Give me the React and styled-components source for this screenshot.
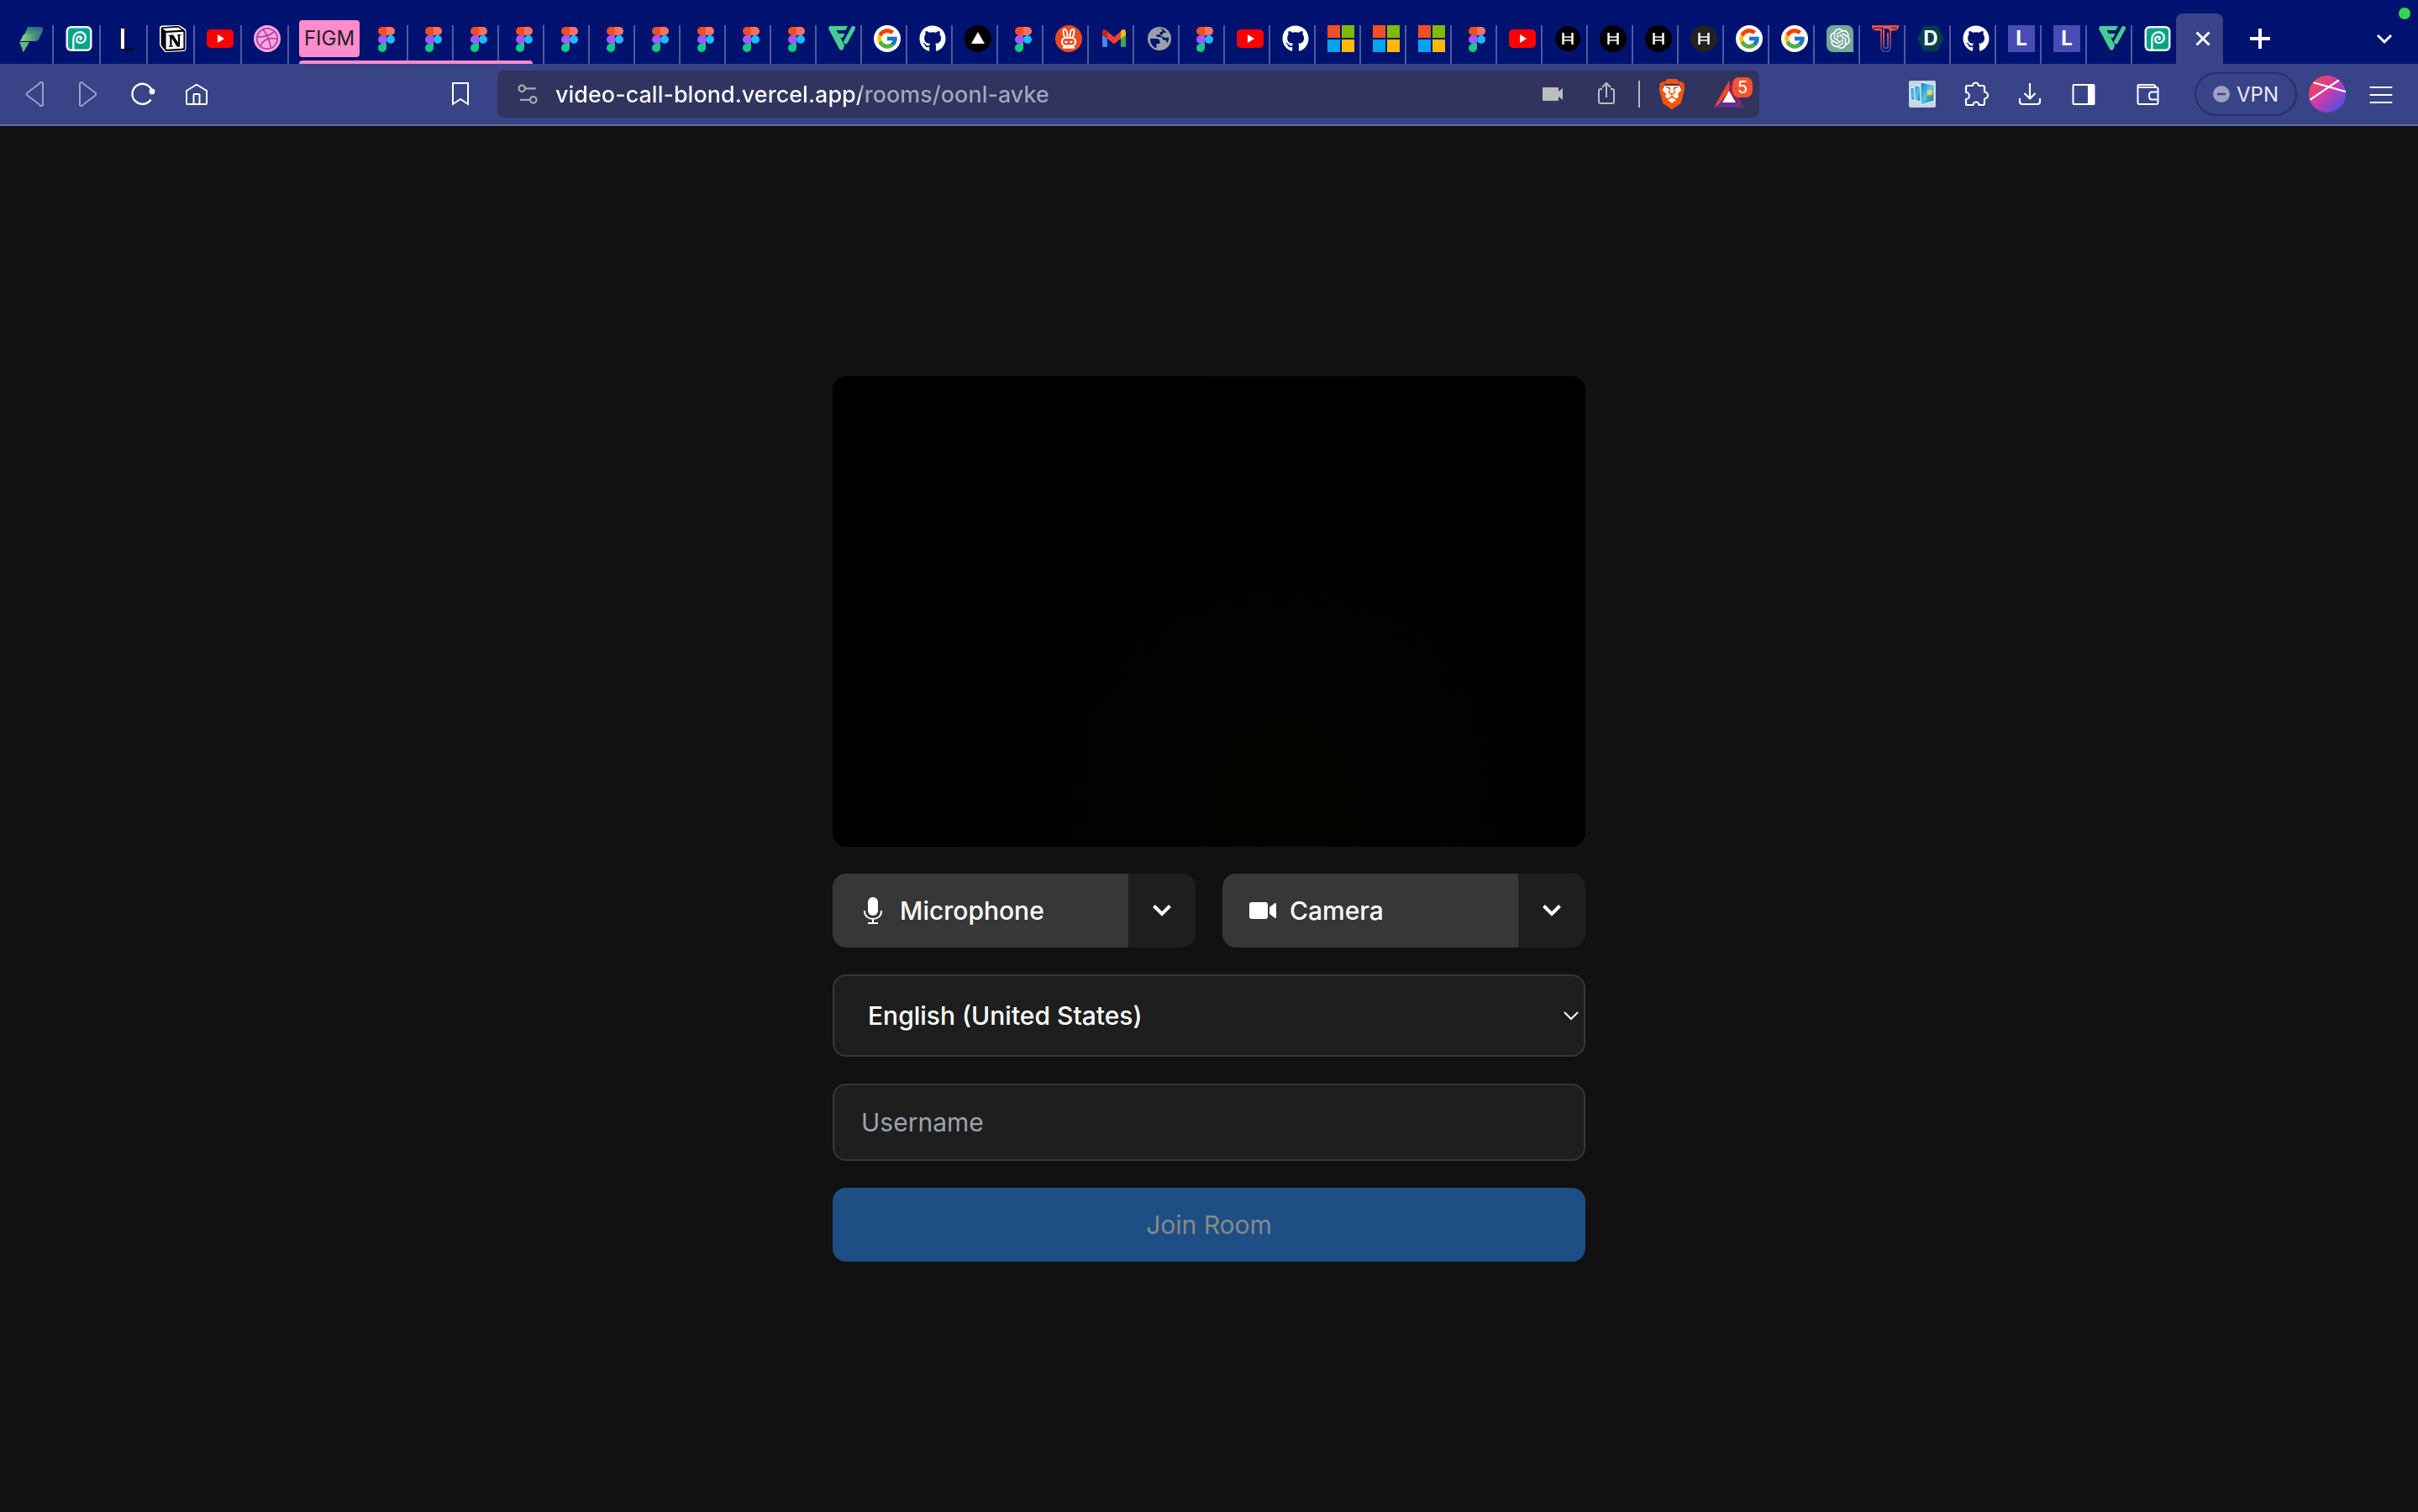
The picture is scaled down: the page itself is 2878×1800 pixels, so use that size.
import React, { useState } from "react";
import styled, { createGlobalStyle, css } from "styled-components";
import { FaGithub } from "react-icons/fa6";
import { FcGoogle } from "react-icons/fc";
import { SiBrave, SiNotion, SiOpenai } from "react-icons/si";

const GlobalStyle = createGlobalStyle`
  * {
    box-sizing: border-box;
  }
  html, body, #root {
    height: 100%;
    margin: 0;
  }
  body {
    background: #121212;
    color: #ffffff;
    font-family: Inter, "Liberation Sans", sans-serif;
  }
  button, input, select {
    font-family: inherit;
    margin: 0;
  }
  svg {
    display: block;
    flex: none;
  }
`;

const Window = styled.div`
  display: flex;
  flex-direction: column;
  min-height: 100%;
`;

/* tab strip */

const TabStrip = styled.nav`
  position: relative;
  display: flex;
  align-items: flex-end;
  height: 76px;
  padding-left: 8px;
  background: #001270;
`;

const Tab = styled.button`
  display: flex;
  flex: none;
  align-items: flex-start;
  width: ${(props) => (props.$wide ? 56 : 54)}px;
  height: 46px;
  padding: 0 0 0 14px;
  background: none;
  border: none;
  border-right: 2px solid ${(props) => (props.$last ? "transparent" : "#505a9e")};
  cursor: pointer;
`;

const TabGroup = styled.div`
  position: relative;
  display: flex;
  align-items: flex-end;
  height: 52px;
  margin-left: 12px;
  &::after {
    content: "";
    position: absolute;
    left: 0;
    bottom: 0;
    width: 278px;
    height: 4px;
    background: #ff8ccc;
    border-radius: 4px 4px 0 0;
  }
`;

const GroupLabel = styled.button`
  align-self: flex-start;
  width: 72px;
  height: 44px;
  margin-right: 2px;
  padding: 0;
  background: #ff8ccc;
  border: none;
  border-radius: 4px;
  color: #202124;
  font-size: 24px;
  line-height: 44px;
  cursor: pointer;
`;

const ActiveTab = styled.div`
  display: flex;
  flex: none;
  justify-content: center;
  width: 56px;
  height: 60px;
  margin-left: -2px;
  padding: 14px 0 0 8px;
  background: #394387;
  border-radius: 8px 8px 0 0;
`;

const StripButton = styled.button`
  display: flex;
  align-items: center;
  justify-content: center;
  width: 56px;
  height: 60px;
  margin-left: ${(props) => (props.$end ? "auto" : "16px")};
  margin-right: ${(props) => (props.$end ? "12px" : "0")};
  padding: 0;
  background: none;
  border: none;
`;

const CloseButton = styled.button`
  display: flex;
  align-items: center;
  justify-content: center;
  width: 32px;
  height: 32px;
  padding: 0;
  background: none;
  border: none;
`;

const RecordingDot = styled.span`
  position: absolute;
  top: 9px;
  right: 9px;
  width: 14px;
  height: 14px;
  border-radius: 50%;
  background: #32d74b;
`;

const Badge = styled.span`
  display: flex;
  align-items: center;
  justify-content: center;
  width: 32px;
  height: 32px;
  border-radius: ${(props) => props.$radius || "0"};
  background: ${(props) => props.$color};
  color: #ffffff;
  font-size: 24px;
  font-weight: 700;
  line-height: 32px;
`;

const HexBadge = styled(Badge)`
  clip-path: polygon(25% 3%, 75% 3%, 100% 50%, 75% 97%, 25% 97%, 0 50%);
`;

/* toolbar */

const Toolbar = styled.header`
  display: flex;
  align-items: center;
  height: 74px;
  padding: 0 12px 0 9px;
  background: #394387;
  border-bottom: 2px solid #656da3;
`;

const ToolButton = styled.button`
  display: flex;
  align-items: center;
  justify-content: center;
  flex: none;
  width: 64px;
  height: 64px;
  padding: 0;
  background: none;
  border: none;
  color: #ffffff;
  opacity: ${(props) => (props.disabled ? 0.5 : 1)};
`;

const LeftTools = styled.div`
  display: flex;
  flex: 0 0 571px;
  margin-right: 12px;
  & > :last-child {
    margin-left: auto;
  }
`;

const AddressBar = styled.form`
  display: flex;
  flex: 1;
  align-items: center;
  min-width: 0;
  height: 56px;
  padding: 0 8px 0 24px;
  background: #30345f;
  border-radius: 8px;
`;

const AddressInput = styled.input`
  flex: 1;
  min-width: 0;
  height: 56px;
  margin-left: 21px;
  padding: 0;
  border: none;
  outline: none;
  background: linear-gradient(90deg, #ffffff 363px, #a4a6bc 363px);
  background-clip: text;
  -webkit-background-clip: text;
  color: transparent;
  font-size: 27px;
  font-weight: 500;
`;

const AddressTools = styled.div`
  display: flex;
  align-items: center;
`;

const AddressButton = styled(ToolButton)`
  height: 56px;
`;

const RewardsButton = styled(AddressButton)`
  position: relative;
  width: 56px;
  margin-left: 8px;
`;

const AddressDivider = styled.span`
  width: 2px;
  height: 32px;
  margin: 0 6px;
  background: #b5b6c3;
`;

const Count = styled.span`
  position: absolute;
  top: 8px;
  right: 0;
  width: 24px;
  height: 24px;
  border-radius: 8px;
  background: #fb542b;
  font-size: 20px;
  line-height: 24px;
  text-align: center;
`;

const RightTools = styled.div`
  display: flex;
  flex: 0 0 772px;
  align-items: center;
  justify-content: flex-end;
`;

const WalletButton = styled(ToolButton)`
  margin: 0 24px 0 12px;
`;

const VpnButton = styled.button`
  display: flex;
  align-items: center;
  flex: none;
  gap: 8px;
  width: 122px;
  height: 52px;
  margin-right: 4px;
  padding: 0 0 0 20px;
  background: none;
  border: 2px solid #282f68;
  border-radius: 26px;
  color: #eaebf3;
  font-size: 24px;
`;

/* pre-join screen */

const Main = styled.main`
  display: flex;
  flex: 1;
  align-items: center;
  justify-content: center;
`;

const JoinCard = styled.form`
  display: flex;
  flex-direction: column;
  gap: 32px;
  width: 960px;
  max-width: 100%;
  padding: 32px;
  border-radius: 16px;
  background: #111111;
`;

const Preview = styled.div`
  aspect-ratio: 16 / 10;
  border-radius: 16px;
  background: radial-gradient(circle at 60% 90%, #030300, #000000 70%);
`;

const Devices = styled.div`
  display: grid;
  grid-template-columns: 1fr 1fr;
  gap: 32px;
`;

const DeviceGroup = styled.div`
  display: flex;
  height: 88px;
  border-radius: 16px;
  overflow: hidden;
`;

const control = css`
  border: none;
  color: #ffffff;
  font-size: 30px;
`;

const DeviceButton = styled.button`
  ${control}
  display: flex;
  flex: 1;
  align-items: center;
  gap: 16px;
  padding: 0 32px;
  background: #373737;
  font-weight: 500;
`;

const DeviceMenuButton = styled.button`
  ${control}
  display: flex;
  align-items: center;
  justify-content: center;
  width: 80px;
  padding: 0;
  background: #1e1e1e;
`;

const SelectWrap = styled.div`
  position: relative;
  svg {
    position: absolute;
    top: 44px;
    right: 8px;
    pointer-events: none;
  }
`;

const Select = styled.select`
  ${control}
  display: block;
  width: 100%;
  height: 98px;
  padding: 0 40px;
  appearance: none;
  background: #1e1e1e;
  border: 2px solid #373737;
  border-radius: 16px;
  font-weight: 500;
`;

const UsernameInput = styled.input`
  ${control}
  width: 100%;
  height: 92px;
  padding: 0 32px;
  background: #1e1e1e;
  border: 2px solid #373737;
  border-radius: 16px;
  outline: none;
  &::placeholder {
    color: #9ca3af;
    opacity: 1;
  }
`;

const JoinButton = styled.button`
  ${control}
  height: 88px;
  background: #1d4f84;
  border-radius: 16px;
  color: #888888;
`;

/* favicons, all on a 32px box */

const Icon = ({ size = 32, children, ...rest }) => (
  <svg width={size} height={size} viewBox="0 0 32 32" fill="none" {...rest}>
    {children}
  </svg>
);

const FigmaIcon = () => (
  <Icon>
    <path d="M11 2h5v10h-5a5 5 0 0 1 0-10z" fill="#f24e1e" />
    <path d="M16 2h5a5 5 0 0 1 0 10h-5z" fill="#ff7262" />
    <path d="M16 12h-5a5 5 0 0 0 0 10h5z" fill="#a259ff" />
    <circle cx="21" cy="17" r="5" fill="#1abcfe" />
    <path d="M11 22h5v5a5 5 0 1 1-5-5z" fill="#0acf83" />
  </Icon>
);

const PitchIcon = () => (
  <Icon>
    <defs>
      <linearGradient id="leaf" x1="0" y1="1" x2="1" y2="0">
        <stop offset="0" stopColor="#5fae7c" />
        <stop offset="0.500" stopColor="#37827f" />
        <stop offset="1" stopColor="#1f5f88" />
      </linearGradient>
      <linearGradient id="leafLow" x1="0" y1="0" x2="1" y2="0">
        <stop offset="0" stopColor="#9ad77c" />
        <stop offset="1" stopColor="#2c6f86" />
      </linearGradient>
    </defs>
    <path d="M11 2h15q4 0 3 4l-2 5H7z" fill="url(#leaf)" />
    <path d="M6 11h21l-3 6q-1 2-4 2H2z" fill="url(#leafLow)" />
    <path d="M1 20h12l-7 12q-1 0-2-5z" fill="#5fb977" />
  </Icon>
);

const SwirlIcon = () => (
  <Icon>
    <rect x="0.500" y="1" width="31" height="30" rx="6" fill="#f2f2f0" />
    <rect x="3" y="3.500" width="26" height="25" rx="4" fill="#00a48c" />
    <path
      d="M9.300 29V17C9.300 11.500 12.800 8.300 17.500 8.300a6.400 6.400 0 0 1 0 12.800c-3.600 0-4.800-2.700-4.300-4.800.6-2.400 3.100-3.300 4.800-2.300 1.500 1 .9 2.900-.5 2.900"
      stroke="#f2f2f0"
      strokeWidth="2.400"
      strokeLinecap="round"
    />
  </Icon>
);

const LineIcon = () => (
  <Icon>
    <path d="M9.500 3.500h5v25h-5z" fill="#ffffff" stroke="#1a1a1a" />
    <path d="M14 29h11" stroke="#000000" strokeWidth="2" />
  </Icon>
);

const NotionIcon = () => (
  <Icon>
    <path
      d="M2.500 0.500l20-.5q2 0 3.500 1.500l4.500 3q1 1 1 2.500v21q0 2.500-2.500 3l-21 1q-2 0-3-1.500l-4-5q-1-1.500-1-3V3.500q0-2.700 2.500-3z"
      fill="#ffffff"
    />
    <SiNotion x="1" y="1" width="30" height="30" size={30} color="#000000" />
  </Icon>
);

const YoutubeIcon = () => (
  <Icon>
    <rect y="5" width="32" height="22" rx="5" fill="#ff0000" />
    <path d="M13 11v10l8-5z" fill="#ffffff" />
  </Icon>
);

const DribbbleIcon = () => (
  <Icon>
    <circle cx="16" cy="16" r="16" fill="#ffa6e4" />
    <g stroke="#b2479a" strokeWidth="1.800">
      <circle cx="16" cy="16" r="12.200" />
      <path d="M11 5c5 6 8 13 9.500 22.500" />
      <path d="M4 14c9 0 16-1 20.500-7" />
      <path d="M7.500 25c4-8 11-11 20.500-8.500" />
    </g>
  </Icon>
);

const FvIcon = () => (
  <Icon>
    <path
      d="M2.500 1H23l-2.700 5H9.500l2.200 4h8l-2.600 5h-2.600l4.600 9-1.500 4.500q-2.500 2.500-4.600 0L.5 5Q-.5 1 2.500 1z"
      fill="#45cf8f"
    />
    <path d="M29.500 3.500L20.500 20" stroke="#45cf8f" strokeWidth="5" strokeLinecap="round" />
  </Icon>
);

const GoogleIcon = () => (
  <Badge $color="#ffffff" $radius="50%">
    <FcGoogle size={28} />
  </Badge>
);

const TriangleIcon = () => (
  <Icon>
    <circle cx="16" cy="16" r="16" fill="#000000" />
    <path d="M16 8l8 14H8z" fill="#ffffff" />
  </Icon>
);

const RabbitIcon = () => (
  <Icon>
    <circle cx="16" cy="16" r="16" fill="#eb4a1e" />
    <path
      d="M11.500 15C9.500 11 8.500 4.800 11 4.800s3.500 4 3.500 9.500M20.500 15C22.500 11 23.500 4.800 21 4.800s-3.500 4-3.500 9.500"
      stroke="#ffffff"
      strokeWidth="2"
    />
    <rect x="8" y="15" width="16" height="9.500" rx="4.500" stroke="#ffffff" strokeWidth="2.200" />
    <path d="M10 26.500h12" stroke="#ffffff" strokeWidth="2.500" strokeLinecap="round" />
    <path d="M12.500 20h1M18.500 20h1" stroke="#ffffff" strokeWidth="2.500" strokeLinecap="round" />
  </Icon>
);

const GmailIcon = () => (
  <Icon>
    <path d="M2 8v16.500Q2 26 3.500 26H8V13z" fill="#4285f4" />
    <path d="M24 13v13h4.500q1.500 0 1.500-1.500V8z" fill="#34a853" />
    <path d="M8 7.500l8 6.500 8-6.500V16l-8 6.500L8 16z" fill="#ea4335" />
    <path d="M2 12V8c0-3 3-4 5-2l1 1v9z" fill="#c5221f" />
    <path d="M30 12V8c0-3-3-4-5-2l-1 1v9z" fill="#fbbc04" />
  </Icon>
);

const GlobeIcon = () => (
  <Icon>
    <circle cx="16" cy="16" r="14" fill="#9aa0a6" />
    <g fill="#001270">
      <path d="M5 16h7.500q4 0 4 4v2h-4v5.500Q5 25 5 16z" />
      <path d="M12 5.700q4-1.500 8-.3-1 2.600-3.500 2.800v3H12.500v2.500q3 0 5 .3 2.500.5 2.500 3.500h2.500q2 0 2 4 3-3 2.500-7-4 .5-5.500-1.500-1-2.500 1-3 2-.5 1-2.500l-2-1.500-1-1.500q-4-1-8 1.200z" />
    </g>
    <path d="M16 11.500h3.500q0-2 2-3l3.500 1.500 2 4-3 1-4-1z" fill="#9aa0a6" />
  </Icon>
);

const MicrosoftIcon = () => (
  <Icon>
    <path d="M0 0h15v15H0z" fill="#f25022" />
    <path d="M17 0h15v15H17z" fill="#7fba00" />
    <path d="M0 17h15v15H0z" fill="#00a4ef" />
    <path d="M17 17h15v15H17z" fill="#ffb900" />
  </Icon>
);

const HIcon = ({ fill = "#000000", r = 16 }) => (
  <Icon>
    <circle cx="16" cy="16" r={r} fill={fill} />
    <path d="M10.500 9v14M21.500 9v14" stroke="#ffffff" strokeWidth="2.400" />
    <path d="M11 14h10M11 18h10" stroke="#ffffff" strokeWidth="1.600" />
  </Icon>
);

const TIcon = () => (
  <Icon>
    <defs>
      <linearGradient id="tee" gradientUnits="userSpaceOnUse" x1="0" y1="0" x2="0" y2="32">
        <stop offset="0" stopColor="#ff5a3c" />
        <stop offset="0.500" stopColor="#b84a5c" />
        <stop offset="1" stopColor="#3b4795" />
      </linearGradient>
    </defs>
    <g stroke="url(#tee)">
      <path d="M0 1.500h32M4 5h8M20 5h8M13 3h10" strokeWidth="2.600" />
      <path d="M1 1.500q.5 4 4 4h4.500q1.500 0 1.500 2v18q0 6 5.500 6t5.500-6V9q0-3.500 3.500-3.500h1.500q3.500 0 4-4" strokeWidth="1.600" />
      <path d="M14 5v20q0 2.500 2.500 2.500T19 25V9" strokeWidth="2" />
    </g>
  </Icon>
);

const favicons = {
  pitch: <PitchIcon />,
  swirl: <SwirlIcon />,
  line: <LineIcon />,
  notion: <NotionIcon />,
  youtube: <YoutubeIcon />,
  dribbble: <DribbbleIcon />,
  figma: <FigmaIcon />,
  fv: <FvIcon />,
  google: <GoogleIcon />,
  github: <FaGithub size={32} color="#ffffff" />,
  triangle: <TriangleIcon />,
  rabbit: <RabbitIcon />,
  gmail: <GmailIcon />,
  globe: <GlobeIcon />,
  microsoft: <MicrosoftIcon />,
  hSmall: <HIcon r={15} />,
  h: <HIcon />,
  hGrey: <HIcon fill="#222222" />,
  openai: (
    <Badge $color="#74aa9c" $radius="8px 8px 0 8px">
      <SiOpenai size={24} />
    </Badge>
  ),
  tee: <TIcon />,
  d: <HexBadge $color="#023e4f">D</HexBadge>,
  l: <Badge $color="#484cb5">L</Badge>,
};

const pinnedTabs = ["pitch", "swirl", "line", "notion", "youtube", "dribbble"];
const groupTabs = ["figma", "figma", "figma", "figma"];
const openTabs = [
  "figma", "figma", "figma", "figma", "figma", "figma", "fv", "google",
  "github", "triangle", "figma", "rabbit", "gmail", "globe", "figma", "youtube",
  "github", "microsoft", "microsoft", "microsoft", "figma", "youtube",
  "hSmall", "h", "h", "hGrey", "google", "google", "openai", "tee", "d",
  "github", "l", "l", "fv", "swirl",
];

const Tabs = () => (
  <TabStrip aria-label="Tabs">
    {pinnedTabs.map((name) => (
      <Tab key={name} $wide aria-label={name}>
        {favicons[name]}
      </Tab>
    ))}
    <TabGroup>
      <GroupLabel>FIGM</GroupLabel>
      {groupTabs.map((name, i) => (
        <Tab key={i} $wide={i === 0} aria-label={name}>
          {favicons[name]}
        </Tab>
      ))}
    </TabGroup>
    {openTabs.map((name, i) => (
      <Tab key={i} $last={i === openTabs.length - 1} aria-label={name}>
        {favicons[name]}
      </Tab>
    ))}
    <ActiveTab>
      <CloseButton aria-label="Close tab">
        <Icon stroke="#ffffff" strokeWidth="3">
          <path d="M8.500 8.500l15 15M23.500 8.500l-15 15" />
        </Icon>
      </CloseButton>
    </ActiveTab>
    <StripButton aria-label="New tab">
      <Icon stroke="#ffffff" strokeWidth="4">
        <path d="M16 4v24M4 16h24" />
      </Icon>
    </StripButton>
    <StripButton $end aria-label="Search tabs">
      <Icon stroke="#ffffff" strokeWidth="3">
        <path d="M8 12l8 8 8-8" />
      </Icon>
    </StripButton>
    <RecordingDot />
  </TabStrip>
);

const BrowserBar = () => {
  const [url, setUrl] = useState("video-call-blond.vercel.app/rooms/oonl-avke");
  return (
    <Toolbar>
      <LeftTools>
        <ToolButton disabled aria-label="Back">
          <Icon stroke="#ffffff" strokeWidth="2">
            <path d="M22 3.500a2 2 0 0 1 4 1v23a2 2 0 0 1-4 1L7.500 17.500a2 2 0 0 1 0-3z" />
          </Icon>
        </ToolButton>
        <ToolButton disabled aria-label="Forward">
          <Icon stroke="#ffffff" strokeWidth="2">
            <path d="M10 3.500a2 2 0 0 0-4 1v23a2 2 0 0 0 4 1L24.500 17.500a2 2 0 0 0 0-3z" />
          </Icon>
        </ToolButton>
        <ToolButton aria-label="Reload">
          <Icon stroke="#ffffff" strokeWidth="2.400">
            <path d="M26.500 22.500A12 12 0 1 1 27.500 11" />
            <circle cx="28" cy="13" r="2.200" fill="#ffffff" />
          </Icon>
        </ToolButton>
        <ToolButton aria-label="Home">
          <Icon stroke="#ffffff" strokeWidth="2">
            <path d="M5 12L16.500 5q.5-.5 1 0L29 12v15q0 1-1 1H6q-1 0-1-1z" />
            <path d="M13.500 28V17q0-1 1-1h5q1 0 1 1v11" />
          </Icon>
        </ToolButton>
        <ToolButton aria-label="Bookmark this tab">
          <Icon stroke="#ffffff" strokeWidth="2">
            <path d="M7 3h18v25l-9-6-9 6z" />
          </Icon>
        </ToolButton>
      </LeftTools>
      <AddressBar onSubmit={(e) => e.preventDefault()}>
        <Icon size={24} stroke="#a7abb0" strokeWidth="3">
          <circle cx="7" cy="7" r="5" />
          <path d="M12 7h17M4 25h16" />
          <circle cx="25" cy="25" r="5" />
        </Icon>
        <AddressInput
          aria-label="Address"
          value={url}
          onChange={(e) => setUrl(e.target.value)}
        />
        <AddressTools>
          <AddressButton type="button" aria-label="Camera in use">
            <Icon fill="#bdbdbd">
              <path d="M5 8h17q1 0 1 1v4l5-4v14l-5-4v4q0 1-1 1H5q-1 0-1-1V9q0-1 1-1z" />
            </Icon>
          </AddressButton>
          <AddressButton type="button" aria-label="Share">
            <Icon stroke="#bdbdbd" strokeWidth="2">
              <path d="M11 10H9q-2 0-2 2v13q0 2 2 2h14q2 0 2-2V12q0-2-2-2h-2M16 20V3M11 8l5-5 5 5" />
            </Icon>
          </AddressButton>
          <AddressDivider />
          <AddressButton type="button" aria-label="Brave Shields">
            <Icon size={36}>
              <path d="M8 7h16l3 6-4 12-7 4-7-4-4-12z" fill="#ffffff" />
              <SiBrave size={32} color="#fb5404" />
            </Icon>
          </AddressButton>
          <RewardsButton type="button" aria-label="Brave Rewards">
            <svg width="36" height="32" viewBox="0 0 36 32">
              <path d="M18 0L0 32l7-5 11-15z" fill="#ff4724" />
              <path d="M18 0v12l11 15 7 5z" fill="#9e1f63" />
              <path d="M0 32h36l-8-6H8z" fill="#662d91" />
              <path d="M18 12l8 14H10z" fill="#ffffff" />
            </svg>
            <Count>5</Count>
          </RewardsButton>
        </AddressTools>
      </AddressBar>
      <RightTools>
        <ToolButton aria-label="Screenshot extension">
          <Icon>
            <defs>
              <linearGradient id="pane" x1="0" y1="0" x2="1" y2="1">
                <stop offset="0" stopColor="#1a78c8" />
                <stop offset="0.500" stopColor="#55c6e8" />
                <stop offset="1" stopColor="#1b57a0" />
              </linearGradient>
            </defs>
            <rect width="32" height="32" rx="2" fill="#c3d8df" />
            <path d="M2 8l5 1v15l-5-2z" fill="url(#pane)" stroke="#e8f4f8" />
            <path d="M7 6l7 1v18l-7-2z" fill="url(#pane)" stroke="#e8f4f8" />
            <path d="M14 2l16 3v19l-16 5z" fill="url(#pane)" stroke="#e8f4f8" />
            <circle cx="25" cy="14" r="3.500" fill="#e2d35c" />
            <path d="M20 19l6-2-2 5z" fill="#58a948" />
          </Icon>
        </ToolButton>
        <ToolButton aria-label="Extensions">
          <Icon stroke="#ffffff" strokeWidth="2.200" strokeLinejoin="round">
            <path d="M4 7.500q0-1.500 1.500-1.500H12a3.500 3.500 0 0 1 7 0h5q2 0 2 2v5.500a3.500 3.500 0 0 1 0 8V27q0 2-2 2h-4.500a3.500 3.500 0 0 0-7 0H5.500Q4 29 4 27.500V22a3.800 3.800 0 0 0 0-8z" />
          </Icon>
        </ToolButton>
        <ToolButton aria-label="Downloads">
          <Icon stroke="#ffffff" strokeWidth="2.200">
            <path d="M16 3v18M9.500 15l6.500 6.500 6.500-6.500M4 21v4q0 3 3 3h18q3 0 3-3v-4" />
          </Icon>
        </ToolButton>
        <ToolButton aria-label="Sidebar">
          <Icon stroke="#ffffff" strokeWidth="2">
            <rect x="3.500" y="5" width="25" height="23" rx="1" />
            <path d="M22 5h6v23h-6z" fill="#ffffff" />
          </Icon>
        </ToolButton>
        <WalletButton aria-label="Wallet">
          <Icon stroke="#ffffff" strokeWidth="2">
            <path d="M28.500 13v-3q0-2-2-2H4.500V6q0-1 1-1H23q2 0 3 3M4.500 6v20q0 2 2 2h20q2 0 2-2v-3" />
            <path d="M28.500 13.500H21q-3 0-3 4.500t3 4.500h7.500z" />
          </Icon>
        </WalletButton>
        <VpnButton>
          <Icon size={20}>
            <circle cx="16" cy="16" r="16" fill="#9ca1c3" />
            <path d="M8 16h16" stroke="#394387" strokeWidth="4" />
          </Icon>
          VPN
        </VpnButton>
        <ToolButton aria-label="Profile">
          <Icon size={44}>
            <defs>
              <linearGradient id="avatar" x1="0.100" y1="0.100" x2="0.900" y2="0.900">
                <stop offset="0" stopColor="#f9484f" />
                <stop offset="0.500" stopColor="#c739b3" />
                <stop offset="1" stopColor="#4b55e0" />
              </linearGradient>
            </defs>
            <circle cx="16" cy="16" r="16" fill="url(#avatar)" />
            <path d="M4 6l28 8M26 4L1 21" stroke="#ffffff" strokeWidth="1.600" />
          </Icon>
        </ToolButton>
        <ToolButton aria-label="Menu">
          <Icon stroke="#ffffff" strokeWidth="2.200" strokeLinecap="round">
            <path d="M3.500 8h25M3.500 17h25M3.500 26h25" />
          </Icon>
        </ToolButton>
      </RightTools>
    </Toolbar>
  );
};

const MenuChevron = () => (
  <Icon stroke="#ffffff" strokeWidth="4">
    <path d="M6.500 10.500l9.500 9.500 9.500-9.500" />
  </Icon>
);

const JoinForm = () => {
  const [username, setUsername] = useState("");
  return (
    <JoinCard onSubmit={(e) => e.preventDefault()}>
      <Preview />
      <Devices>
        <DeviceGroup>
          <DeviceButton type="button">
            <Icon stroke="#ffffff" strokeWidth="2">
              <rect x="10" y="0" width="12" height="22" rx="6" fill="#ffffff" stroke="none" />
              <path d="M6 16v1c0 5 4 9 10 9s10-4 10-9v-1M16 26v5M10 31h12" />
            </Icon>
            Microphone
          </DeviceButton>
          <DeviceMenuButton type="button" aria-label="Microphone options">
            <MenuChevron />
          </DeviceMenuButton>
        </DeviceGroup>
        <DeviceGroup>
          <DeviceButton type="button">
            <Icon fill="#ffffff">
              <rect x="0" y="6" width="22" height="20" rx="3" />
              <path d="M24 12l6-4.500q2-1 2 .5v16q0 1.500-2 .5L24 20z" />
            </Icon>
            Camera
          </DeviceButton>
          <DeviceMenuButton type="button" aria-label="Camera options">
            <MenuChevron />
          </DeviceMenuButton>
        </DeviceGroup>
      </Devices>
      <SelectWrap>
        <Select aria-label="Language" defaultValue="en-US">
          <option value="en-US">English (United States)</option>
        </Select>
        <svg width="18" height="11" viewBox="0 0 18 11" fill="none">
          <path d="M1 1l8 8 8-8" stroke="#ffffff" strokeWidth="2" />
        </svg>
      </SelectWrap>
      <UsernameInput
        aria-label="Username"
        placeholder="Username"
        value={username}
        onChange={(e) => setUsername(e.target.value)}
      />
      <JoinButton disabled={!username}>Join Room</JoinButton>
    </JoinCard>
  );
};

export default function App() {
  return (
    <Window>
      <GlobalStyle />
      <Tabs />
      <BrowserBar />
      <Main>
        <JoinForm />
      </Main>
    </Window>
  );
}
